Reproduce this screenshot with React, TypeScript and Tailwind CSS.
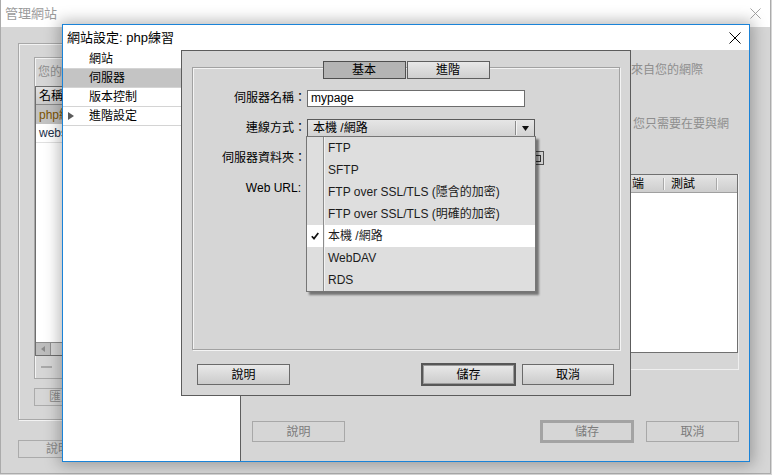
import React from 'react';

function CloseIcon({ className }: { className?: string }) {
  return (
    <svg viewBox="0 0 12 12" className={className} fill="none" stroke="currentColor" strokeWidth="1">
      <path d="M0.5 0.5 L11.5 11.5 M11.5 0.5 L0.5 11.5" />
    </svg>
  );
}

function CheckIcon() {
  return (
    <svg viewBox="0 0 8 8" className="w-[8px] h-[8px]" fill="none" stroke="#111" strokeWidth="1.7">
      <path d="M0.8 4.2 L3 6.6 L7.3 1" />
    </svg>
  );
}

const menuItems = [
  'FTP',
  'SFTP',
  'FTP over SSL/TLS (隱含的加密)',
  'FTP over SSL/TLS (明確的加密)',
  '本機 /網路',
  'WebDAV',
  'RDS',
];

export default function App() {
  return (
    <div className="relative w-[772px] h-[475px] overflow-hidden bg-[#d6d6d6] text-[12px] leading-[16px] text-black [font-family:'Liberation_Sans','Noto_Sans_CJK_TC',sans-serif]">
      {/* 管理網站 (背景視窗) */}
      <div className="flex flex-col w-[771px] h-[474px] border-l border-r border-b border-[#ababab]">
        <div className="flex items-center justify-between h-[27px] bg-white pl-[4px] pr-[9px]">
          <span className="text-[13px] text-[#9b9b9b]">管理網站</span>
          <CloseIcon className="w-[11px] h-[11px] text-[#9a9a9a]" />
        </div>
        <div className="flex-1 pl-[17px] pt-[16px]">
          <div className="w-[400px] h-[377px] border border-[#a8a8a8] shadow-[inset_1px_1px_0_#f3f3f3,1px_1px_0_#f3f3f3] pt-[13px] pl-[15px]">
            <div className="flex flex-col w-[360px] h-[322px] border border-[#a8a8a8] shadow-[inset_1px_1px_0_#f3f3f3]">
              <div className="h-[28px] flex items-center pl-[3px] text-[#8e8e8e]">您的網站</div>
              <div className="flex flex-col h-[270px] border border-[#6e6e6e] bg-white">
                <div className="h-[18px] flex items-center pl-[3px] bg-linear-to-b from-[#e2e2e2] to-[#cbcbcb] border-b border-[#8a8a8a]">名稱</div>
                <div className="h-[19px] flex items-center pl-[3px] bg-[#c3c3c3] text-[#7d5300]">php練習</div>
                <div className="h-[19px] flex items-center pl-[3px] text-[#22304a] border-b border-[#e0e0e0]">website</div>
                <div className="flex-1" />
                <div className="h-[13px] flex bg-[#d6d6d6] border-t border-[#8e8e8e]">
                  <div className="w-[15px] flex items-center justify-center bg-[#bdbdbd] border-r border-[#8e8e8e]">
                    <svg viewBox="0 0 4 6" className="w-[4px] h-[6px]" fill="#8a8a8a">
                      <path d="M4 0 L0 3 L4 6 Z" />
                    </svg>
                  </div>
                </div>
              </div>
              <div className="pl-[6px] pt-[10px]">
                <div className="w-[11px] h-[2px] bg-[#a9a9a9]" />
              </div>
            </div>
            <div className="mt-[9px] w-[100px] h-[18px] border border-[#ababab] flex items-center pl-[14px] text-[#8a8a8a]">匯入</div>
          </div>
          <div className="mt-[20px] w-[120px] h-[18px] border border-[#ababab] flex items-center pl-[27px] text-[#8a8a8a]">說明</div>
        </div>
      </div>

      {/* 網站設定: php練習 */}
      <div className="absolute left-[62px] top-[24px] w-[688px] h-[438px] flex flex-col bg-[#d6d6d6] border border-[#1a83d8] shadow-[0_0_14px_3px_rgba(0,0,0,0.28)]">
        <div className="flex items-center justify-between h-[25px] bg-white pl-[4px] pr-[8px]">
          <span className="text-[13px]">網站設定: php練習</span>
          <CloseIcon className="w-[12px] h-[12px] text-black" />
        </div>
        <div className="flex-1 flex">
          <div className="w-[178px] bg-white border-r border-[#5e5e5e]">
            <div className="h-[19px] flex items-center pl-[26px] border-b border-[#d4d4d4]">網站</div>
            <div className="h-[19px] flex items-center pl-[26px] bg-[#c4c4c4] border-b border-[#d4d4d4]">伺服器</div>
            <div className="h-[19px] flex items-center pl-[26px] border-b border-[#d4d4d4]">版本控制</div>
            <div className="h-[19px] flex items-center pl-[5px] border-b border-[#d4d4d4]">
              <svg viewBox="0 0 6 8" className="w-[6px] h-[8px]" fill="#5b5b5b">
                <path d="M0 0 L6 4 L0 8 Z" />
              </svg>
              <span className="ml-[15px]">進階設定</span>
            </div>
          </div>
          <div className="flex-1 flex flex-col">
            <div className="pl-[390px] pt-[12px] text-[#8e8e8e]">
              <p className="whitespace-nowrap">來自您的網際</p>
              <p className="whitespace-nowrap mt-[38px] pl-[2px]">您只需要在要與網</p>
            </div>
            <div className="ml-[389px] mt-[42px] w-[109px] h-[196px] border-r border-b border-[#efefef]">
              <div className="flex flex-col w-[108px] h-[179px] border border-[#707070] bg-white">
                <div className="h-[18px] flex items-center bg-linear-to-b from-[#e4e4e4] to-[#cdcdcd] border-b border-[#a0a0a0]">
                  <span className="w-[32px] pl-[1px]">端</span>
                  <span className="w-[1px] h-[12px] bg-[#a8a8a8]" />
                  <span className="w-[1px] h-[12px] bg-[#f5f5f5]" />
                  <span className="w-[51px] pl-[6px]">測試</span>
                  <span className="w-[1px] h-[12px] bg-[#a8a8a8]" />
                  <span className="w-[1px] h-[12px] bg-[#f5f5f5]" />
                </div>
              </div>
            </div>
            <div className="mt-auto flex items-center pl-[11px] pr-[10px] pb-[18px]">
              <div className="w-[93px] h-[21px] border border-[#a8a8a8] flex items-center justify-center text-[#7c7c7c]">說明</div>
              <div className="flex-1" />
              <div className="w-[94px] h-[23px] border-[3px] border-[#a3a3a3] flex items-center justify-center text-[#7c7c7c]">儲存</div>
              <div className="ml-[12px] w-[93px] h-[21px] border border-[#a8a8a8] flex items-center justify-center text-[#7c7c7c]">取消</div>
            </div>
          </div>
        </div>

        {/* 伺服器設定 */}
        <div className="absolute left-[118px] top-[25px] w-[450px] h-[346px] flex flex-col bg-[#d6d6d6] border border-[#5c5c5c] pt-[16px] px-[10px]">
          <div className="h-[283px] border border-[#a2a2a2] shadow-[inset_1px_1px_0_#f4f4f4,1px_1px_0_#f4f4f4]">
            <div className="flex justify-center gap-[1px] -mt-[7px]">
              <div className="w-[83px] h-[18px] flex items-center justify-center bg-[#b4b4b4] border border-[#4f4f4f]">基本</div>
              <div className="w-[83px] h-[18px] flex items-center justify-center bg-linear-to-b from-[#e8e8e8] to-[#cfcfcf] border border-[#5f5f5f]">進階</div>
            </div>
            <div className="mt-[10px] flex flex-col gap-[12px]">
              <div className="flex items-center h-[18px]">
                <span className="w-[113px] text-right">伺服器名稱：</span>
                <div className="ml-[1px] w-[218px] h-[17px] bg-white border border-[#6d6d6d] flex items-center pl-[3px]">mypage</div>
              </div>
              <div className="flex items-center h-[18px]">
                <span className="w-[113px] text-right">連線方式：</span>
                <div className="relative ml-[1px] w-[228px] h-[18px] flex items-center border border-[#5a5a5a] bg-linear-to-b from-[#e6e6e6] to-[#d2d2d2]">
                  <span className="flex-1 pl-[5px]">本機 /網路</span>
                  <span className="w-[1px] h-[14px] bg-[#8a8a8a]" />
                  <span className="w-[1px] h-[14px] bg-[#f4f4f4]" />
                  <span className="w-[17px] flex items-center justify-center">
                    <svg viewBox="0 0 7 5" className="w-[7px] h-[5px]" fill="#111">
                      <path d="M0 0 L7 0 L3.5 5 Z" />
                    </svg>
                  </span>

                  {/* 下拉選單 */}
                  <div className="absolute left-[-2px] top-[16px] z-10 w-[230px] h-[156px] flex flex-col bg-[#dedede] border border-[#767676] shadow-[3px_3px_2px_rgba(0,0,0,0.45)]">
                    {menuItems.map((item, i) => (
                      <div key={item} className={i === 4 ? 'h-[22px] flex bg-white' : 'h-[22px] flex'}>
                        <span className="w-[16px] flex items-center justify-center">{i === 4 && <CheckIcon />}</span>
                        <span className="w-[1px] bg-[#8c8c8c]" />
                        <span className="w-[1px] bg-[#f2f2f2]" />
                        <span className="flex items-center pl-[3px] text-[#1c1c1c] whitespace-nowrap">{item}</span>
                      </div>
                    ))}
                  </div>
                </div>
              </div>
              <div className="flex items-center h-[18px]">
                <span className="w-[113px] text-right">伺服器資料夾：</span>
                <div className="ml-[1px] w-[221px] h-[17px] bg-white border border-[#6d6d6d]" />
                <div className="ml-[2px] w-[14px] h-[14px] border border-[#505050] bg-[#cfcfcf] flex items-center justify-center">
                  <span className="w-[8px] h-[7px] border border-[#303030]" />
                </div>
              </div>
              <div className="flex items-center h-[18px]">
                <span className="w-[108px] text-right">Web URL:</span>
                <div className="ml-[6px] w-[218px] h-[17px] bg-white border border-[#6d6d6d]" />
              </div>
            </div>
          </div>
          <div className="mt-[13px] flex items-center h-[23px]">
            <div className="ml-[5px] w-[93px] h-[21px] flex items-center justify-center border border-[#6a6a6a] bg-linear-to-b from-[#e9e9e9] to-[#cbcbcb]">說明</div>
            <div className="flex-1" />
            <div className="w-[95px] h-[23px] flex items-center justify-center border-2 border-[#575757] shadow-[inset_0_0_0_1px_#9a9a9a] bg-linear-to-b from-[#e9e9e9] to-[#cbcbcb]">儲存</div>
            <div className="ml-[6px] mr-[6px] w-[92px] h-[21px] flex items-center justify-center border border-[#6a6a6a] bg-linear-to-b from-[#e9e9e9] to-[#cbcbcb]">取消</div>
          </div>
        </div>
      </div>
    </div>
  );
}
